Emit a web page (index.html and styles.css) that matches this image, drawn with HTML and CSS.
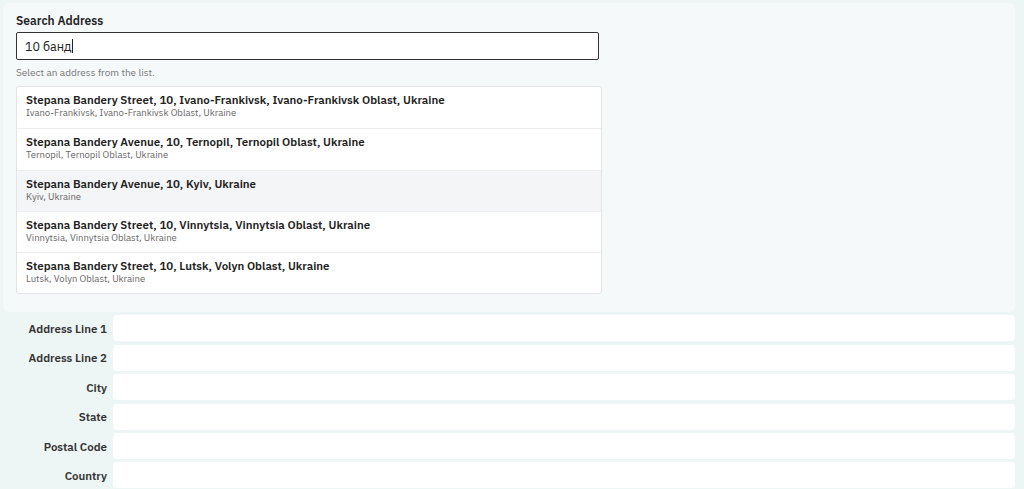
FILE: index.html
```html
<!DOCTYPE html>
<html lang="en">
<head>
    <meta charset="UTF-8">
    <meta name="viewport" content="width=device-width, initial-scale=1.0">
    <title>Address Lookup</title>
    <link rel="stylesheet" href="styles.css">
</head>
<body>
    <div class="search-panel">
        <label class="search-label" for="search">Search Address</label>
        <div class="search-box">
            <span class="search-value">10 банд</span><span class="caret"></span>
        </div>
        <p class="help">Select an address from the list.</p>
        <ul class="results">
            <li class="result">
                <div class="result-title">Stepana Bandery Street, 10, Ivano-Frankivsk, Ivano-Frankivsk Oblast, Ukraine</div>
                <div class="result-sub">Ivano-Frankivsk, Ivano-Frankivsk Oblast, Ukraine</div>
            </li>
            <li class="result">
                <div class="result-title">Stepana Bandery Avenue, 10, Ternopil, Ternopil Oblast, Ukraine</div>
                <div class="result-sub">Ternopil, Ternopil Oblast, Ukraine</div>
            </li>
            <li class="result active">
                <div class="result-title">Stepana Bandery Avenue, 10, Kyiv, Ukraine</div>
                <div class="result-sub">Kyiv, Ukraine</div>
            </li>
            <li class="result">
                <div class="result-title">Stepana Bandery Street, 10, Vinnytsia, Vinnytsia Oblast, Ukraine</div>
                <div class="result-sub">Vinnytsia, Vinnytsia Oblast, Ukraine</div>
            </li>
            <li class="result">
                <div class="result-title">Stepana Bandery Street, 10, Lutsk, Volyn Oblast, Ukraine</div>
                <div class="result-sub">Lutsk, Volyn Oblast, Ukraine</div>
            </li>
        </ul>
    </div>

    <div class="address-form">
        <div class="form-row">
            <label>Address Line 1</label>
            <div class="field"></div>
        </div>
        <div class="form-row">
            <label>Address Line 2</label>
            <div class="field"></div>
        </div>
        <div class="form-row">
            <label>City</label>
            <div class="field"></div>
        </div>
        <div class="form-row">
            <label>State</label>
            <div class="field"></div>
        </div>
        <div class="form-row">
            <label>Postal Code</label>
            <div class="field"></div>
        </div>
        <div class="form-row">
            <label>Country</label>
            <div class="field"></div>
        </div>
    </div>
</body>
</html>
```

FILE: styles.css
```css
body {
    font-family: "IBM Plex Sans", "Noto Sans", Arial, sans-serif;
    margin: 0;
    padding: 3px 9px 0 3px;
    background-color: #edf5f5;
    color: #222;
}
.search-panel {
    background-color: #f5f9fa;
    border-radius: 6px;
    padding: 10px 13px 18px;
}
.search-label {
    display: block;
    font-size: 12px;
    font-weight: 600;
    line-height: 16px;
    margin-bottom: 3px;
}
.search-box {
    width: 573px;
    height: 26px;
    border: 1.5px solid #333;
    border-radius: 2px;
    background-color: white;
    display: flex;
    align-items: center;
    padding-left: 8px;
    box-sizing: content-box;
    font-size: 12.5px;
}
.caret {
    display: inline-block;
    width: 1px;
    height: 14px;
    background-color: #222;
}
.help {
    font-size: 10px;
    color: #777;
    margin: 6px 0 7px;
    line-height: 13px;
}
.results {
    list-style: none;
    margin: 0;
    padding: 0;
    width: 584px;
    background-color: white;
    border: 1px solid #e2e4e6;
    border-radius: 3px;
}
.result {
    height: 41.3px;
    box-sizing: border-box;
    padding: 5px 9px 0;
    border-top: 1px solid #eceef0;
}
.result:first-child {
    border-top: none;
}
.result.active {
    background-color: #f4f5f6;
}
.result-title {
    font-size: 11.5px;
    font-weight: 600;
    line-height: 15px;
    color: #222;
}
.result-sub {
    font-size: 9.5px;
    line-height: 12px;
    color: #666;
}
.address-form {
    display: flex;
    flex-direction: column;
    gap: 3.4px;
    padding-top: 3px;
}
.form-row {
    display: flex;
    align-items: center;
    gap: 6px;
}
.form-row label {
    width: 104px;
    text-align: right;
    font-size: 11.5px;
    font-weight: 600;
    color: #333;
}
.field {
    flex: 1;
    height: 26px;
    background-color: white;
    border-radius: 4px;
}
```
